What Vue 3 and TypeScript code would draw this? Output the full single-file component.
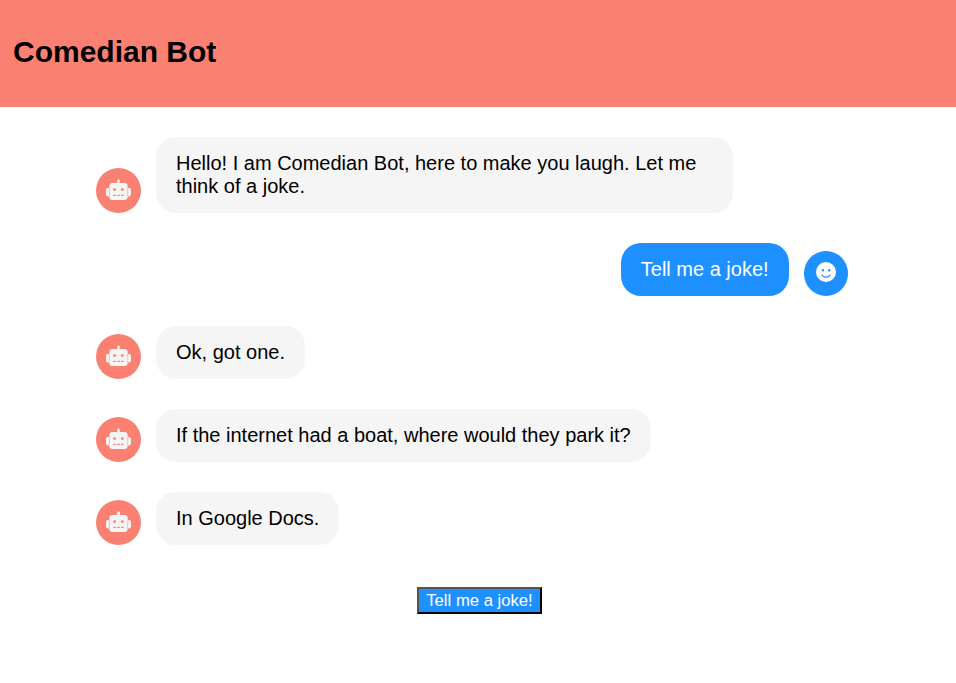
<script setup lang="ts">
import { ref } from 'vue'

interface Message {
  id: number
  from: 'bot' | 'user'
  text: string
}

const jokeRequest = 'Tell me a joke!'

const messages = ref<Message[]>([
  { id: 1, from: 'bot', text: 'Hello! I am Comedian Bot, here to make you laugh. Let me think of a joke.' },
  { id: 2, from: 'user', text: jokeRequest },
  { id: 3, from: 'bot', text: 'Ok, got one.' },
  { id: 4, from: 'bot', text: 'If the internet had a boat, where would they park it?' },
  { id: 5, from: 'bot', text: 'In Google Docs.' },
])

function askForJoke() {
  messages.value.push({ id: messages.value.length + 1, from: 'user', text: jokeRequest })
}
</script>

<template>
  <div class="page">
    <header class="header">
      <h1 class="title">Comedian Bot</h1>
    </header>
    <main class="chat">
      <div v-for="message in messages" :key="message.id" class="message" :class="message.from">
        <span class="avatar">
          <svg v-if="message.from === 'bot'" class="robot" viewBox="0 -26 640 538" aria-hidden="true">
            <g fill="currentColor">
              <rect x="284" y="-14" width="72" height="110" rx="36" />
              <rect x="86" y="78" width="468" height="434" rx="84" />
              <path d="M74 204V422H48c-26.500 0-48-21.500-48-48V252c0-26.500 21.500-48 48-48zM566 204V422h26c26.500 0 48-21.500 48-48V252c0-26.500-21.500-48-48-48z" />
            </g>
            <g class="face">
              <circle cx="222" cy="246" r="37" />
              <circle cx="418" cy="246" r="37" />
              <rect x="188" y="380" width="68" height="30" rx="15" />
              <rect x="286" y="380" width="68" height="30" rx="15" />
              <rect x="384" y="380" width="68" height="30" rx="15" />
            </g>
          </svg>
          <svg v-else class="smile" viewBox="0 0 512 512" aria-hidden="true">
            <path fill="currentColor" d="M256 512A256 256 0 1 0 256 0a256 256 0 1 0 0 512zM164.1 325.5C182 346.2 212.6 368 256 368s74-21.8 91.9-42.5c5.8-6.7 15.9-7.4 22.6-1.6s7.4 15.9 1.6 22.6C349.8 372.1 311.1 400 256 400s-93.8-27.9-116.1-53.5c-5.8-6.7-5.1-16.8 1.6-22.6s16.8-5.1 22.6 1.6zM144.4 208a32 32 0 1 1 64 0 32 32 0 1 1-64 0zm192-32a32 32 0 1 1 0 64 32 32 0 1 1 0-64z" />
          </svg>
        </span>
        <p class="bubble">{{ message.text }}</p>
      </div>
      <button class="ask" type="button" @click="askForJoke">{{ jokeRequest }}</button>
    </main>
  </div>
</template>

<style>
body {
  background: #fff;
}
</style>

<style scoped>
.page {
  font-family: "Liberation Sans", Arial, sans-serif;
  font-size: 20px;
  line-height: 23px;
  color: #000;
}

.header {
  box-sizing: border-box;
  height: 107px;
  padding: 35px 13px 0;
  background: salmon;
}

.title {
  margin: 0;
  font-size: 30px;
  line-height: 34px;
  font-weight: bold;
}

.chat {
  display: flex;
  flex-direction: column;
  gap: 30px;
  padding: 30px 108px 0 96px;
}

.message {
  display: flex;
  align-items: flex-end;
  gap: 15px;
}

.message.user {
  flex-direction: row-reverse;
}

.avatar {
  display: flex;
  align-items: center;
  justify-content: center;
  flex: none;
  width: 45px;
  height: 45px;
  border-radius: 50%;
  background: salmon;
  color: whitesmoke;
}

.user .avatar {
  width: 44.4px;
  background: dodgerblue;
  color: #fff;
}

.robot {
  width: 25px;
  height: 21px;
  margin-bottom: 2px;
}

.face {
  fill: salmon;
}

.smile {
  width: 20px;
  height: 20px;
  margin-bottom: 3px;
}

.bubble {
  box-sizing: border-box;
  max-width: 577px;
  margin: 0;
  padding: 15px 20px;
  border-radius: 20px;
  background: whitesmoke;
}

.user .bubble {
  background: dodgerblue;
  color: #fff;
}

.ask {
  box-sizing: border-box;
  align-self: center;
  width: 125px;
  height: 27px;
  margin: 12px 0 0 15px;
  padding: 0;
  border: 2px outset #000;
  background: dodgerblue;
  color: #fff;
  font-family: inherit;
  font-size: 16.67px;
  line-height: 22px;
  white-space: nowrap;
}
</style>
